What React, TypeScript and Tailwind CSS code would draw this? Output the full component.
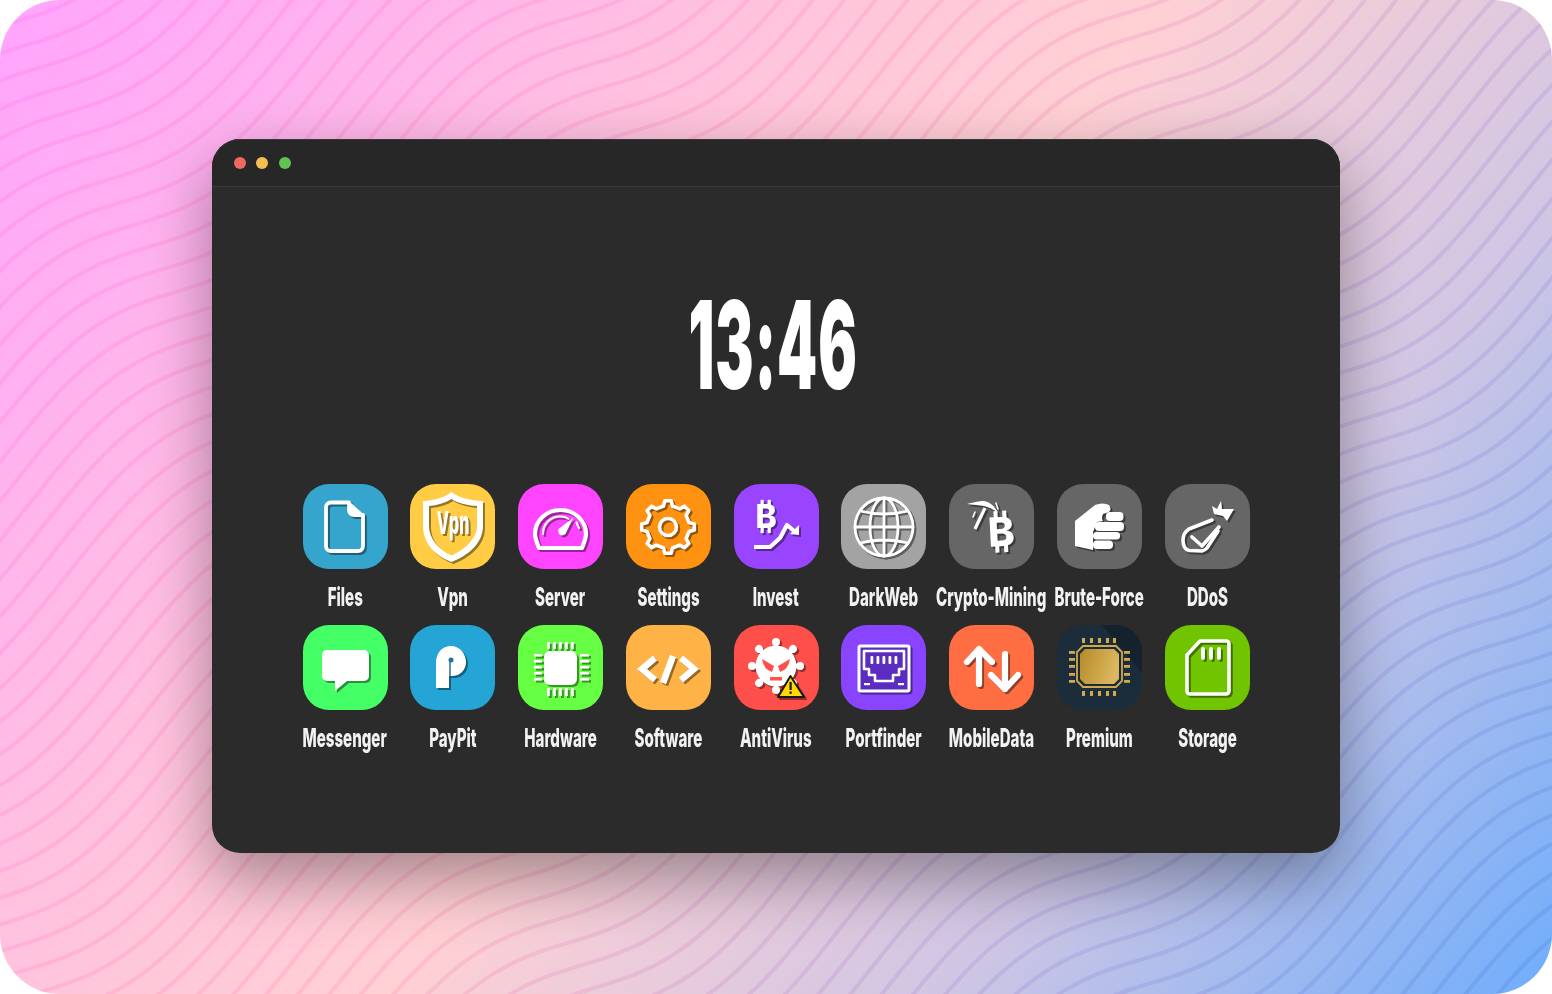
import React from "react";

function wavePaths() {
  const out: string[] = [];
  for (let k = -20; k < 90; k++) {
    const c = k * 33;
    let d = "";
    for (let x = -20; x <= 1580; x += 6) {
      const y = c - 0.78 * x + 29 * Math.sin((2 * Math.PI * (x - c * 0.41)) / 380);
      if (y < -60 || y > 1060) continue;
      d += (d ? "L" : "M") + x + " " + y.toFixed(1);
    }
    if (d) out.push(d);
  }
  return out;
}

function gearPath(cx: number, cy: number, ro: number, ri: number, n: number) {
  let d = "";
  const st = (2 * Math.PI) / n;
  for (let i = 0; i < n; i++) {
    const a = i * st - Math.PI / 2;
    const pts: [number, number][] = [
      [ri, a - st * 0.27],
      [ro, a - st * 0.15],
      [ro, a + st * 0.15],
      [ri, a + st * 0.27],
    ];
    pts.forEach(([r, t], j) => {
      const x = cx + r * Math.cos(t);
      const y = cy + r * Math.sin(t);
      d += (i === 0 && j === 0 ? "M" : "L") + x.toFixed(1) + " " + y.toFixed(1);
    });
  }
  return d + "Z";
}

const Svg = ({ children }: { children: React.ReactNode }) => (
  <svg viewBox="0 0 85 85" width="85" height="85" className="block drop-shadow-[2.5px_2.5px_0_rgba(0,0,0,0.42)]">
    {children}
  </svg>
);

const sw = { fill: "none", stroke: "#fff", strokeLinecap: "round", strokeLinejoin: "round" } as const;
const font = "Inter, 'Liberation Sans', sans-serif";

const BitcoinB = ({ size, x, y, rot = 0 }: { size: number; x: number; y: number; rot?: number }) => (
  <g transform={`translate(${x} ${y}) rotate(${rot})`}>
    {[-0.17, 0.05].map((o) => (
      <g key={o}>
        <rect x={size * o} y={-size * 0.88} width={size * 0.1} height={size * 0.2} fill="#fff" />
        <rect x={size * o} y={-size * 0.02} width={size * 0.1} height={size * 0.18} fill="#fff" />
      </g>
    ))}
    <text x={0} y={0} textAnchor="middle" fontFamily={font} fontWeight={800} fontSize={size} fill="#fff">B</text>
  </g>
);

const icons: Record<string, React.ReactNode> = {
  Files: (
    <Svg>
      <path {...sw} strokeWidth={3.8} d="M28 18.500H46V26a5 5 0 0 0 5 5H60V62a5 5 0 0 1-5 5H28a5 5 0 0 1-5-5V23.500a5 5 0 0 1 5-5z" />
      <path fill="#fff" d="M46 18.500L60 31H50Q46 31 46 27Z" stroke="#fff" strokeWidth={2} strokeLinejoin="round" />
    </Svg>
  ),
  Vpn: (
    <Svg>
      <path
        fill="#fff"
        fillRule="evenodd"
        d="M41.500 8C48 13 58 16.500 73 17V42C73 60 57 72 41.500 78C26 72 13 60 13 42V17C25 16.500 35 13 41.500 8ZM41.500 15C48 19 56 21.500 67 22V42C67 55 54 66 41.500 71.500C29 66 19 55 19 42V22C27 21.500 35 19 41.500 15Z"
      />
      <g transform="translate(43 50) scale(0.5 1)">
        <text x={0} y={0} textAnchor="middle" fontFamily={font} fontWeight={800} fontSize={32} fill="#fff">Vpn</text>
      </g>
    </Svg>
  ),
  Server: (
    <Svg>
      <path {...sw} strokeWidth={4.2} d="M21 64H64C66 59 68 54 68 50C68 36 56 26 42.500 26C29 26 17 36 17 50C17 54 19 59 21 64Z" />
      <path {...sw} strokeWidth={2} d="M25 50C25 40 32 32.500 42 32.500C45 32.500 48 33 50.500 35" />
      <path fill="#fff" d="M40.500 45L55.500 33.500L47.500 50Q44 52.500 41.500 50.500Q39.500 48 40.500 45Z" />
      <path {...sw} strokeWidth={2.200} d="M58.500 38.500L61 44" />
    </Svg>
  ),
  Settings: (
    <Svg>
      <path {...sw} strokeWidth={3.600} d={gearPath(42, 43, 26.500, 21.500, 8)} />
      <circle {...sw} strokeWidth={3.600} cx={42} cy={43} r={8.500} />
    </Svg>
  ),
  Invest: (
    <Svg>
      <BitcoinB size={32} x={32} y={44} />
      <path fill="none" stroke="#fff" strokeWidth={4.200} strokeLinejoin="round" d="M20 63H36L46 54L53 41L60 47" />
      <path fill="#fff" d="M65 41L65 51L56 50Z" />
    </Svg>
  ),
  DarkWeb: (
    <Svg>
      <g {...sw} strokeWidth={2.800}>
        <circle cx={43} cy={43} r={29} />
        <ellipse cx={43} cy={43} rx={14} ry={29} />
        <path d="M43 14V72M14 43H72M19 27Q43 33 67 27M19 59Q43 53 67 59" />
      </g>
    </Svg>
  ),
  "Crypto-Mining": (
    <Svg>
      <path fill="#fff" d="M18 20C26 18 30 17 35 17C41 18 46 22 49 29C44 25 39 23 35 22C30 21 24 21 18 20Z" />
      <path fill="none" stroke="#fff" strokeWidth={3.200} d="M36 24L26 45" />
      <path {...sw} strokeWidth={1.500} d="M47 19L49 25M26 28L24 33" />
      <BitcoinB size={40} x={53} y={62} rot={-3} />
    </Svg>
  ),
  "Brute-Force": (
    <Svg>
      <path fill="#fff" d="M18 37L38 21Q46 18 52 21Q55 25 52 28L46 30Q44 34 46 37L40 38L36 48V66L18 62Z" />
      <rect x={49} y={28} width={17.500} height={9} rx={4} fill="#fff" />
      <rect x={38} y={38} width={29} height={9} rx={4} fill="#fff" />
      <rect x={36} y={48} width={27} height={7.500} rx={3.500} fill="#fff" />
      <rect x={36} y={56.500} width={20} height={8.500} rx={4} fill="#fff" />
    </Svg>
  ),
  DDoS: (
    <Svg>
      <path {...sw} strokeWidth={3.600} d="M47 36L24 45Q18 49 18 56Q18 65 24 66.500L37 67Q40 66.500 42 64L53 47" />
      <path {...sw} strokeWidth={3.600} d="M27 53L37 62L54 43" />
      <path fill="#fff" d="M56 17L57 25L69 25L62 37L58 32L49 30L47 22L52 25Z" />
    </Svg>
  ),
  Messenger: (
    <Svg>
      <path fill="#fff" d="M24 25H61a5 5 0 0 1 5 5V51a5 5 0 0 1-5 5H44L32 66L32 56H24a5 5 0 0 1-5-5V30a5 5 0 0 1 5-5Z" />
    </Svg>
  ),
  PayPit: (
    <Svg>
      <path fill="#fff" d="M26 63V38C26 28 32 21 41 21C50 21 56 29 56 37C56 45 50 51 42 51L39 51V63Z" />
      <circle cx={41} cy={35} r={2.500} fill="#24729a" />
      <path d="M40 35V51" stroke="#24729a" strokeWidth={1.500} />
    </Svg>
  ),
  Hardware: (
    <Svg>
      <rect x={26} y={26} width={33} height={34} rx={6} fill="#fff" />
      <g fill="#fff">
        {[30, 36, 42, 48, 54].map((x) => (
          <g key={x}>
            <rect x={x - 1} y={17} width={2.800} height={7} />
            <rect x={x - 1} y={63} width={2.800} height={8} />
          </g>
        ))}
        {[30, 36, 42, 48, 54].map((y) => (
          <g key={y}>
            <rect x={16} y={y - 1} width={8} height={2.600} />
            <rect x={62} y={y - 1} width={9} height={2.600} />
          </g>
        ))}
      </g>
    </Svg>
  ),
  Software: (
    <Svg>
      <g fill="none" stroke="#fff" strokeWidth={6.500}>
        <path d="M29 33L16 44L29 55" />
        <path d="M55 33L68 44L55 55" />
        <path d="M47 31L37 58" />
      </g>
    </Svg>
  ),
  AntiVirus: (
    <Svg>
      <g fill="#fff">
        {[0, 45, 90, 135, 180, 225, 270, 315].map((a) => (
          <g key={a} transform={`rotate(${a} 42 41)`}>
            <rect x={40} y={18} width={4} height={8} />
            <circle cx={42} cy={17} r={4} />
          </g>
        ))}
        <circle cx={42} cy={41} r={20.500} />
      </g>
      <path fill="#ff4f4a" d="M28 34L40 41L38 47Q30 45 28 34ZM56 34L44 41L46 47Q54 45 56 34ZM36 52H48V55.500H36Z" />
      <path d="M56.500 51L70 72H44Z" fill="#ffd900" stroke="#1a1a1a" strokeWidth={2} strokeLinejoin="round" />
      <rect x={55.500} y={57} width={2.200} height={8} fill="#1a1a1a" />
      <rect x={55.500} y={66.500} width={2.200} height={2.400} fill="#1a1a1a" />
    </Svg>
  ),
  Portfinder: (
    <Svg>
      <rect x={18} y={21} width={50} height={45} fill="#5a2cc0" stroke="#fff" strokeWidth={3} rx={1.500} />
      <path fill="none" stroke="#fff" strokeWidth={2.600} strokeLinejoin="round" d="M23 26H63V44H58V50H52V56H34V50H28V44H23Z" />
      <g fill="#fff">
        {[30, 36, 42, 48, 54].map((x) => (
          <rect key={x} x={x - 0.500} y={31} width={2.800} height={8} rx={1} />
        ))}
        <rect x={23} y={58} width={6} height={2.200} />
        <rect x={57} y={58} width={6} height={2.200} />
      </g>
    </Svg>
  ),
  MobileData: (
    <Svg>
      <g {...sw} strokeWidth={6.200}>
        <path d="M30 59V24M18 37L30 24L43 37" />
        <path d="M56 29V64M42 50L56 64L69 50" />
      </g>
    </Svg>
  ),
  Premium: (
    <svg viewBox="0 0 85 85" width="85" height="85" className="block">
      <defs>
        <linearGradient id="gold" x1="0" y1="0" x2="1" y2="0.300">
          <stop offset="0" stopColor="#b58a28" />
          <stop offset="1" stopColor="#dcb75f" />
        </linearGradient>
      </defs>
      <path fill="#15222e" d="M45 0H70L85 15V48Z" />
      <path fill="none" stroke="#d2a94f" strokeWidth={1.800} d="M26 21H59L65 27V56L59 62H26L20 56V27Z" />
      <path fill="url(#gold)" d="M28 24H57L62 29V54L57 59H28L23 54V29Z" />
      <g fill="#d2a94f">
        {[26, 34, 42, 50, 57].map((x) => (
          <g key={x}>
            <rect x={x - 1} y={13} width={3} height={5} />
            <rect x={x - 1} y={66} width={3} height={5} />
          </g>
        ))}
        {[27, 34, 41, 49, 56].map((y) => (
          <g key={y}>
            <rect x={12} y={y - 1} width={6} height={2.800} />
            <rect x={67} y={y - 1} width={6} height={2.800} />
          </g>
        ))}
      </g>
    </svg>
  ),
  Storage: (
    <Svg>
      <path {...sw} strokeWidth={3.600} d="M35 16H61a3 3 0 0 1 3 3V66a3 3 0 0 1-3 3H25a3 3 0 0 1-3-3V30Z" />
      <path {...sw} strokeWidth={3.800} d="M38 24V33M46 24V33M54 24V33" />
    </Svg>
  ),
};

const apps: { name: string; bg: string }[] = [
  { name: "Files", bg: "bg-[#36a5cd]" },
  { name: "Vpn", bg: "bg-[#ffcc44]" },
  { name: "Server", bg: "bg-[#ff44ff]" },
  { name: "Settings", bg: "bg-[#ff9211]" },
  { name: "Invest", bg: "bg-[#9944ff]" },
  { name: "DarkWeb", bg: "bg-[#a3a3a3]" },
  { name: "Crypto-Mining", bg: "bg-[#666666]" },
  { name: "Brute-Force", bg: "bg-[#666666]" },
  { name: "DDoS", bg: "bg-[#666666]" },
  { name: "Messenger", bg: "bg-[#44ff66]" },
  { name: "PayPit", bg: "bg-[#25a5d5]" },
  { name: "Hardware", bg: "bg-[#66ff44]" },
  { name: "Software", bg: "bg-[#ffb347]" },
  { name: "AntiVirus", bg: "bg-[#ff4f4a]" },
  { name: "Portfinder", bg: "bg-[#8844ff]" },
  { name: "MobileData", bg: "bg-[#ff6e42]" },
  { name: "Premium", bg: "bg-[#1b2c3a]" },
  { name: "Storage", bg: "bg-[#70c400]" },
];

export default function App() {
  const waves = wavePaths();
  return (
    <div className="relative flex h-[994px] w-[1552px] items-center justify-center overflow-hidden rounded-[60px] bg-[linear-gradient(128deg,#ffa4fd_0%,#ffc4dc_34%,#ffd0d4_50%,#cfc6e4_74%,#6fadfb_100%)] pb-[2px]">
      <svg className="absolute inset-0" width="1552" height="994" viewBox="0 0 1552 994" fill="none">
        <defs>
          <linearGradient id="wave" gradientUnits="userSpaceOnUse" x1="0" y1="0" x2="1552" y2="994">
            <stop offset="0" stopColor="#ff40d8" />
            <stop offset="0.45" stopColor="#ff4090" />
            <stop offset="0.7" stopColor="#8040c0" />
            <stop offset="1" stopColor="#2050c0" />
          </linearGradient>
        </defs>
        {waves.map((d, i) => (
          <path key={i} d={d} stroke="url(#wave)" strokeWidth={4} strokeOpacity={0.13} />
        ))}
      </svg>
      <div className="relative flex h-[714px] w-[1128px] flex-col rounded-[28px] bg-[#2b2b2b] shadow-[0_25px_65px_rgba(0,0,0,0.36)]">
        <div className="flex h-[48px] items-center gap-[10.4px] rounded-t-[28px] border-b border-[#3a3a3a] bg-[#272727] px-[22px] shadow-[inset_0_1px_0_rgba(255,255,255,0.08)]">
          <span className="size-[12px] rounded-full bg-[#ee6a5f]" />
          <span className="size-[12px] rounded-full bg-[#f5bf4f]" />
          <span className="size-[12px] rounded-full bg-[#5fc454]" />
        </div>
        <div className="mt-[96px] flex h-[124px] items-center justify-center">
          <span className="-translate-x-[3px] scale-x-[0.47] whitespace-nowrap font-['Inter',sans-serif] text-[122px] leading-none font-black tracking-[2px] text-white">
            13:46
          </span>
        </div>
        <div className="mx-auto mt-[77px] grid grid-cols-[repeat(9,107.75px)] grid-rows-[141px_141px]">
          {apps.map((a) => (
            <div key={a.name} className="flex flex-col items-center">
              <div className={`size-[85px] overflow-hidden rounded-[26px] ${a.bg}`}>{icons[a.name]}</div>
              <span className="mt-[15px] scale-x-[0.58] whitespace-nowrap font-['Inter',sans-serif] text-[26px] leading-[26px] font-extrabold text-[#f2f2f2]">
                {a.name}
              </span>
            </div>
          ))}
        </div>
      </div>
    </div>
  );
}
